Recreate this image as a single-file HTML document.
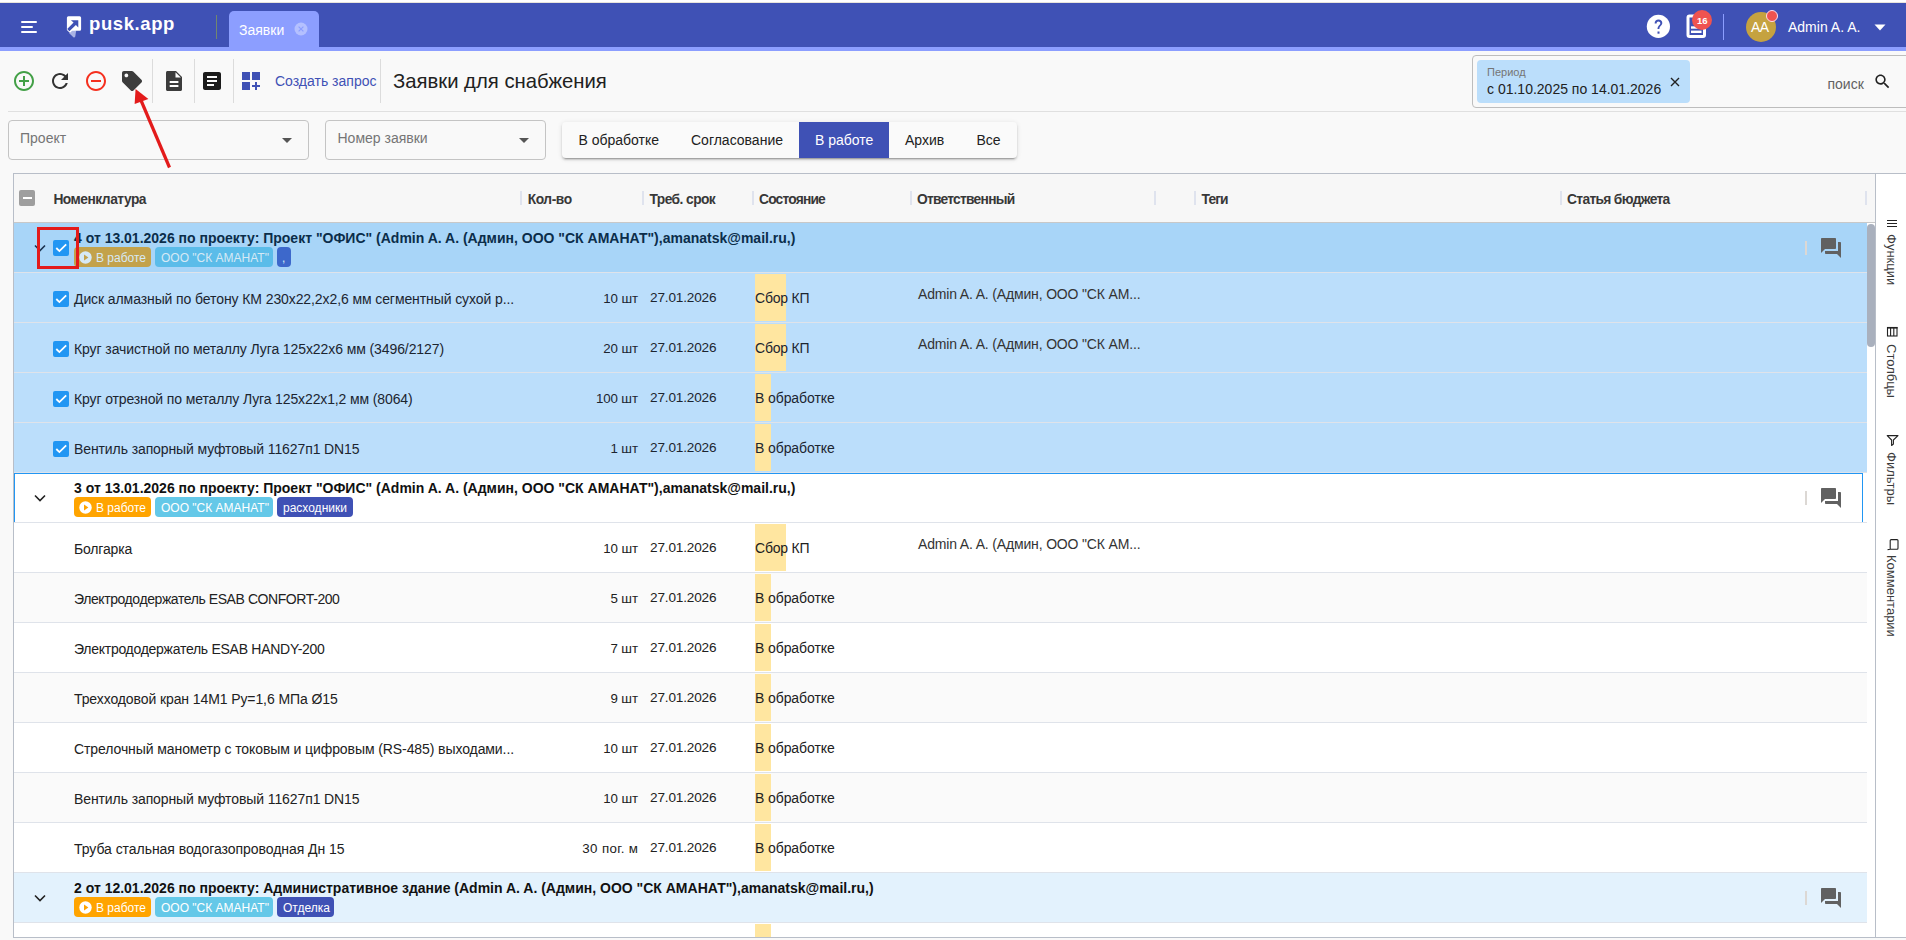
<!DOCTYPE html><html><head><meta charset="utf-8"><style>
*{box-sizing:border-box;margin:0;padding:0}
html,body{width:1906px;height:940px;overflow:hidden;background:#fff}
body{font-family:"Liberation Sans",sans-serif;color:#212121;position:relative}
.a{position:absolute}
.t{position:absolute;white-space:nowrap;line-height:1}
svg{display:block}
</style></head><body>
<div class="a" style="left:0px;top:51px;width:1906px;height:889px;background:#f9f9f9"></div>
<div class="a" style="left:0px;top:2px;width:1906px;height:1px;background:#e8e4dc"></div>
<div class="a" style="left:0px;top:3px;width:1906px;height:44px;background:#3f51b5"></div>
<div class="a" style="left:0px;top:47px;width:1906px;height:4px;background:#8c9eff"></div>
<div class="a" style="left:21px;top:21px;width:16px;height:2px;background:#fff;border-radius:1px"></div>
<div class="a" style="left:21px;top:26px;width:12px;height:2px;background:#fff;border-radius:1px"></div>
<div class="a" style="left:21px;top:31px;width:16px;height:2px;background:#fff;border-radius:1px"></div>
<svg class="a" style="left:60px;top:10px" width="30" height="32" viewBox="60 10 30 32">
<path d="M69.2 33.2 L72.6 29.6 L76.2 30.6 L75.2 36.8 Q74.4 38 73.4 37.2 Z" fill="#a9b3e4"/>
<path d="M68.4 16.2 H79.6 Q81.1 16.2 81.1 17.7 V29.2 Q81.1 30.7 79.6 30.7 H72.2 L70.3 32.6 Q69.6 33.1 69.2 32.3 L66.9 30 V17.7 Q66.9 16.2 68.4 16.2 Z" fill="#fff"/>
<path d="M70.9 20.2 H78.3 V27.4 L75.9 25 L69.4 31.2 L67.2 29 L73.6 22.6 Z" fill="#3f51b5"/>
</svg>
<div class="t" style="left:89px;top:14.74px;font-size:18.5px;color:#fff;font-weight:bold;letter-spacing:0.6px">pusk.app</div>
<div class="a" style="left:216px;top:15px;width:1px;height:24px;background:#71876f"></div>
<div class="a" style="left:229px;top:11px;width:90px;height:36px;background:#8c9eff;border-radius:5px 5px 0 0"></div>
<div class="t" style="left:239px;top:22.65px;font-size:14px;color:#fff;font-weight:normal;">Заявки</div>
<svg class="a" style="left:294px;top:22px" width="14" height="14" viewBox="0 0 14 14">
<circle cx="7" cy="7" r="6.5" fill="#b4c0ff"/>
<path d="M4.6 4.6 L9.4 9.4 M9.4 4.6 L4.6 9.4" stroke="#8c9eff" stroke-width="1.2"/>
</svg>
<svg class="a" style="left:1646px;top:14px" width="25" height="25" viewBox="0 0 25 25">
<circle cx="12.4" cy="12.4" r="11.6" fill="#fff"/>
<path d="M8.6 9.6 C8.6 7.2 10.3 5.6 12.5 5.6 C14.7 5.6 16.3 7.1 16.3 9.1 C16.3 11.6 13.4 12 13.4 15 L11.5 15 C11.5 11.5 14.3 11.2 14.3 9.2 C14.3 8.1 13.5 7.4 12.4 7.4 C11.3 7.4 10.6 8.3 10.6 9.6 Z" fill="#3f51b5"/>
<rect x="11.5" y="17.5" width="2" height="2.2" fill="#3f51b5"/>
</svg>
<svg class="a" style="left:1686px;top:14px" width="21" height="25" viewBox="0 0 21 25">
<rect x="2" y="2" width="16.5" height="20.5" rx="1.5" fill="none" stroke="#fff" stroke-width="3"/>
<rect x="5" y="12.3" width="10.5" height="2.4" fill="#fff"/>
<rect x="5" y="16.6" width="10.5" height="2.4" fill="#fff"/>
</svg>
<div class="a" style="left:1692px;top:10px;width:20px;height:20px;border-radius:50%;background:#ef5350"></div>
<div class="t" style="left:1702.2px;top:15.96px;font-size:9.5px;color:#fff;font-weight:bold;transform:translateX(-50%)">16</div>
<div class="a" style="left:1723px;top:14px;width:1px;height:26px;background:#8c9eff"></div>
<div class="a" style="left:1746px;top:12px;width:30px;height:30px;border-radius:50%;background:#c5a240"></div>
<div class="t" style="left:1751px;top:19.75px;font-size:14px;color:#fff;font-weight:normal;letter-spacing:-0.5px">AA</div>
<div class="a" style="left:1766px;top:10px;width:12px;height:12px;border-radius:50%;background:#ef5350;border:1px solid #fde"></div>
<div class="t" style="left:1788px;top:19.75px;font-size:14px;color:#fff;font-weight:normal;">Admin A. A.</div>
<svg class="a" style="left:1874px;top:24px" width="12" height="7" viewBox="0 0 12 7"><path d="M0.5 0.5 H11.5 L6 6.5 Z" fill="#fff"/></svg>
<svg class="a" style="left:12px;top:69px" width="24" height="24" viewBox="0 0 24 24"><path d="M13 7h-2v4H7v2h4v4h2v-4h4v-2h-4V7zm-1-5C6.48 2 2 6.48 2 12s4.48 10 10 10 10-4.48 10-10S17.52 2 12 2zm0 18c-4.41 0-8-3.59-8-8s3.59-8 8-8 8 3.59 8 8-3.59 8-8 8z" fill="#43a047"/></svg>
<svg class="a" style="left:48px;top:69px" width="24" height="24" viewBox="0 0 24 24"><path d="M17.65 6.35C16.2 4.9 14.21 4 12 4c-4.42 0-7.99 3.58-7.99 8s3.57 8 7.99 8c3.73 0 6.84-2.55 7.73-6h-2.08c-.82 2.33-3.04 4-5.65 4-3.31 0-6-2.69-6-6s2.69-6 6-6c1.66 0 3.14.69 4.22 1.78L13 11h7V4l-2.35 2.35z" fill="#333"/></svg>
<svg class="a" style="left:84px;top:69px" width="24" height="24" viewBox="0 0 24 24"><path d="M7 11v2h10v-2H7zm5-9C6.48 2 2 6.48 2 12s4.48 10 10 10 10-4.48 10-10S17.52 2 12 2zm0 18c-4.41 0-8-3.59-8-8s3.59-8 8-8 8 3.59 8 8-3.59 8-8 8z" fill="#f5301f"/></svg>
<svg class="a" style="left:122px;top:71px" width="20" height="20" viewBox="0 0 512 512"><path fill="#3c3c3c" d="M0 252.118V48C0 21.49 21.49 0 48 0h204.118a48 48 0 0 1 33.941 14.059l211.882 211.882c18.745 18.745 18.745 49.137 0 67.882L293.823 497.941c-18.745 18.745-49.137 18.745-67.882 0L14.059 286.059A48 48 0 0 1 0 252.118zM112 64c-26.51 0-48 21.49-48 48s21.49 48 48 48 48-21.49 48-48-21.49-48-48-48z"/></svg>
<div class="a" style="left:152px;top:59px;width:1px;height:44px;background:#dcdcdc"></div>
<svg class="a" style="left:166px;top:71px" width="16" height="20" viewBox="0 0 16 20">
<path d="M1.5 0 H10 L16 6 V18.5 C16 19.3 15.3 20 14.5 20 H1.5 C0.7 20 0 19.3 0 18.5 V1.5 C0 0.7 0.7 0 1.5 0 Z" fill="#3c3c3c"/>
<path d="M9.5 1.2 V6.5 H14.8 Z" fill="#fff"/>
<rect x="3.7" y="10" width="8.7" height="2" fill="#fff"/>
<rect x="3.7" y="14" width="8.7" height="2" fill="#fff"/>
</svg>
<div class="a" style="left:194px;top:59px;width:1px;height:44px;background:#dcdcdc"></div>
<svg class="a" style="left:200px;top:69px" width="24" height="24" viewBox="0 0 24 24"><path d="M19 3H5c-1.1 0-2 .9-2 2v14c0 1.1.9 2 2 2h14c1.1 0 2-.9 2-2V5c0-1.1-.9-2-2-2zm-5 14H7v-2h7v2zm3-4H7v-2h10v2zm0-4H7V7h10v2z" fill="#1b1b1b"/></svg>
<div class="a" style="left:233px;top:59px;width:1px;height:44px;background:#dcdcdc"></div>
<svg class="a" style="left:239px;top:69px" width="24" height="24" viewBox="0 0 24 24"><path d="M3 3h8v8H3zm10 0h8v8h-8zM3 13h8v8H3zm15 0h-2v3h-3v2h3v3h2v-3h3v-2h-3z" fill="#3f51b5"/></svg>
<div class="t" style="left:275px;top:73.95px;font-size:14px;color:#3f51b5;font-weight:normal;">Создать запрос</div>
<div class="a" style="left:380px;top:59px;width:1px;height:44px;background:#dcdcdc"></div>
<div class="t" style="left:393px;top:71.02px;font-size:20.3px;color:#212121;font-weight:normal;">Заявки для снабжения</div>
<div class="a" style="left:8px;top:111px;width:1898px;height:1px;background:#e0e0e0"></div>
<div class="a" style="left:1472px;top:55px;width:440px;height:53px;border:1px solid #bdbdbd;border-radius:4px"></div>
<div class="a" style="left:1477px;top:60px;width:213px;height:43px;background:#bbdefb;border-radius:4px"></div>
<div class="t" style="left:1487px;top:67.09px;font-size:11px;color:#757575;font-weight:normal;">Период</div>
<div class="t" style="left:1487px;top:82.15px;font-size:14px;color:#212121;font-weight:normal;">с 01.10.2025 по 14.01.2026</div>
<svg class="a" style="left:1669px;top:76px" width="12" height="12" viewBox="0 0 12 12"><path d="M2 2 L10 10 M10 2 L2 10" stroke="#222" stroke-width="1.4"/></svg>
<div class="t" style="left:1827.5px;top:77.15px;font-size:14px;color:#616161;font-weight:normal;">поиск</div>
<svg class="a" style="left:1873px;top:72px" width="19" height="19" viewBox="0 0 24 24"><path fill="#222" d="M15.5 14h-.79l-.28-.27C15.41 12.59 16 11.11 16 9.5 16 5.91 13.09 3 9.5 3S3 5.91 3 9.5 5.91 16 9.5 16c1.61 0 3.09-.59 4.23-1.57l.27.28v.79l5 4.99L20.49 19l-4.99-5zm-6 0C7.01 14 5 11.99 5 9.5S7.01 5 9.5 5 14 7.01 14 9.5 11.99 14 9.5 14z"/></svg>
<div class="a" style="left:8px;top:120px;width:301px;height:40px;border:1px solid #c4c4c4;border-radius:4px"></div>
<div class="t" style="left:20px;top:130.95px;font-size:14px;color:#757575;font-weight:normal;">Проект</div>
<svg class="a" style="left:282px;top:138px" width="10" height="5" viewBox="0 0 10 5"><path d="M0 0H10L5 5Z" fill="#555"/></svg>
<div class="a" style="left:325px;top:120px;width:221px;height:40px;border:1px solid #c4c4c4;border-radius:4px"></div>
<div class="t" style="left:337.5px;top:130.95px;font-size:14px;color:#757575;font-weight:normal;">Номер заявки</div>
<svg class="a" style="left:519px;top:138px" width="10" height="5" viewBox="0 0 10 5"><path d="M0 0H10L5 5Z" fill="#555"/></svg>
<div class="a" style="left:562px;top:122px;width:455px;height:36px;background:#fafafa;border-radius:4px;box-shadow:0 3px 1px -2px rgba(0,0,0,.2),0 2px 2px 0 rgba(0,0,0,.14),0 1px 5px 0 rgba(0,0,0,.12)"></div>
<div class="a" style="left:799px;top:122px;width:90px;height:36px;background:#3f51b5"></div>
<div class="t" style="left:578.5px;top:133.15px;font-size:14px;color:#212121;font-weight:normal;">В обработке</div>
<div class="t" style="left:691px;top:133.15px;font-size:14px;color:#212121;font-weight:normal;">Согласование</div>
<div class="t" style="left:815px;top:133.15px;font-size:14px;color:#fff;font-weight:normal;">В работе</div>
<div class="t" style="left:905px;top:133.15px;font-size:14px;color:#212121;font-weight:normal;">Архив</div>
<div class="t" style="left:976.5px;top:133.15px;font-size:14px;color:#212121;font-weight:normal;">Все</div>
<div class="a" style="left:13px;top:173px;width:1893px;height:765px;background:#fff"></div>
<div class="a" style="left:13px;top:173px;width:1893px;height:1px;background:#b8bec8"></div>
<div class="a" style="left:13px;top:173px;width:1px;height:765px;background:#b8bec8"></div>
<div class="a" style="left:1875px;top:173px;width:1px;height:765px;background:#b8bec8"></div>
<div class="a" style="left:13px;top:937px;width:1893px;height:1px;background:#b8bec8"></div>
<div class="a" style="left:14px;top:174px;width:1861px;height:48px;background:#f7f7f7"></div>
<div class="a" style="left:14px;top:222px;width:1861px;height:1px;background:#c8c8c8"></div>
<div class="a" style="left:19px;top:190px;width:16px;height:16px;background:#9e9e9e;border-radius:2px"></div>
<div class="a" style="left:22.5px;top:197px;width:9px;height:2px;background:#fff"></div>
<div class="t" style="left:53.4px;top:192.92px;font-size:13.8px;color:#383838;font-weight:bold;letter-spacing:-0.503px;">Номенклатура</div>
<div class="t" style="left:527.7px;top:192.92px;font-size:13.8px;color:#383838;font-weight:bold;letter-spacing:-0.432px;">Кол-во</div>
<div class="t" style="left:649.5px;top:192.92px;font-size:13.8px;color:#383838;font-weight:bold;letter-spacing:-0.575px;">Треб. срок</div>
<div class="t" style="left:759px;top:192.92px;font-size:13.8px;color:#383838;font-weight:bold;letter-spacing:-0.806px;">Состояние</div>
<div class="t" style="left:917px;top:192.92px;font-size:13.8px;color:#383838;font-weight:bold;letter-spacing:-0.746px;">Ответственный</div>
<div class="t" style="left:1201.5px;top:192.92px;font-size:13.8px;color:#383838;font-weight:bold;letter-spacing:-0.864px;">Теги</div>
<div class="t" style="left:1567px;top:192.92px;font-size:13.8px;color:#383838;font-weight:bold;letter-spacing:-0.666px;">Статья бюджета</div>
<div class="a" style="left:520px;top:191px;width:2px;height:14px;background:#dfe3ee"></div>
<div class="a" style="left:642px;top:191px;width:2px;height:14px;background:#dfe3ee"></div>
<div class="a" style="left:752px;top:191px;width:2px;height:14px;background:#dfe3ee"></div>
<div class="a" style="left:910px;top:191px;width:2px;height:14px;background:#dfe3ee"></div>
<div class="a" style="left:1154px;top:191px;width:2px;height:14px;background:#dfe3ee"></div>
<div class="a" style="left:1194px;top:191px;width:2px;height:14px;background:#dfe3ee"></div>
<div class="a" style="left:1560px;top:191px;width:2px;height:14px;background:#dfe3ee"></div>
<div class="a" style="left:1865px;top:191px;width:2px;height:14px;background:#dfe3ee"></div>
<div class="a" style="left:14px;top:223px;width:1853px;height:49px;background:#a8d5f8"></div>
<div class="a" style="left:14px;top:272px;width:1853px;height:1px;background:#dfe3ea"></div>
<svg class="a" style="left:34px;top:244px" width="12" height="8" viewBox="0 0 12 8"><path d="M1 1.5 L6 6.5 L11 1.5" fill="none" stroke="#1b3350" stroke-width="1.6"/></svg>
<svg class="a" style="left:53px;top:240px" width="16" height="16" viewBox="0 0 16 16"><rect width="16" height="16" rx="2" fill="#2196f3"/><path d="M3.3 8.0 L6.4 11.1 L13.2 4.3" fill="none" stroke="#fff" stroke-width="1.8"/></svg>
<div class="t" style="left:74px;top:231.15px;font-size:14px;color:#0b2d4a;font-weight:bold;">4 от 13.01.2026 по проекту: Проект "ОФИС" (Admin A. A. (Админ, ООО "СК АМАНАТ"),amanatsk@mail.ru,)</div>
<div class="a" style="left:74px;top:247px;width:77px;height:20px;background:#c3a24b;border-radius:4px"></div>
<svg class="a" style="left:79px;top:251px" width="13" height="13" viewBox="0 0 13 13"><circle cx="6.5" cy="6.5" r="6.2" fill="#d6e9f5"/><path d="M5 3.6 L9.4 6.5 L5 9.4 Z" fill="#c3a24b"/></svg>
<div class="t" style="left:96px;top:251.84px;font-size:12px;color:#d6e9f5;font-weight:normal;">В работе</div>
<div class="a" style="left:155px;top:247px;width:118px;height:20px;background:#5bbce9;border-radius:4px"></div>
<div class="t" style="left:161px;top:251.84px;font-size:12px;color:#d6e9f5;font-weight:normal;">ООО "СК АМАНАТ"</div>
<div class="a" style="left:277px;top:247px;width:14px;height:20px;background:#3d68cb;border-radius:4px"></div>
<div class="t" style="left:282px;top:251.84px;font-size:12px;color:#d6e9f5;font-weight:normal;">,</div>
<div class="a" style="left:1805px;top:241px;width:1.5px;height:14px;background:#dcd8d4"></div>
<svg class="a" style="left:1819px;top:236px" width="24" height="24" viewBox="0 0 24 24"><path fill="#616161" d="M21 6h-2v9H6v2c0 .55.45 1 1 1h11l4 4V7c0-.55-.45-1-1-1zm-4 6V3c0-.55-.45-1-1-1H3c-.55 0-1 .45-1 1v14l4-4h10c.55 0 1-.45 1-1z"/></svg>
<div class="a" style="left:14px;top:273px;width:1853px;height:49px;background:#bbdefb"></div>
<div class="a" style="left:14px;top:322px;width:1853px;height:1px;background:#dfe3ea"></div>
<svg class="a" style="left:53px;top:291px" width="16" height="16" viewBox="0 0 16 16"><rect width="16" height="16" rx="2" fill="#2196f3"/><path d="M3.3 8.0 L6.4 11.1 L13.2 4.3" fill="none" stroke="#fff" stroke-width="1.8"/></svg>
<div class="t" style="left:74px;top:292.15px;font-size:14px;color:#1c2530;font-weight:normal;letter-spacing:-0.095px;">Диск алмазный по бетону КМ 230x22,2x2,6 мм сегментный сухой р...</div>
<div class="t" style="right:1268.13px;top:291.54px;font-size:13.3px;color:#1c2530;font-weight:normal;letter-spacing:-0.130px;">10 шт</div>
<div class="t" style="left:650px;top:291.29px;font-size:13.6px;color:#1c2530;font-weight:normal;letter-spacing:-0.165px;">27.01.2026</div>
<div class="a" style="left:755px;top:274px;width:31px;height:47px;background:#ffe6a0"></div>
<div class="t" style="left:755px;top:290.95px;font-size:14px;color:#1c2530;font-weight:normal;letter-spacing:-0.202px;">Сбор КП</div>
<div class="t" style="left:918px;top:286.95px;font-size:14px;color:#333;font-weight:normal;letter-spacing:-0.162px;">Admin A. A. (Админ, ООО "СК АМ...</div>
<div class="a" style="left:14px;top:323px;width:1853px;height:49px;background:#bbdefb"></div>
<div class="a" style="left:14px;top:372px;width:1853px;height:1px;background:#dfe3ea"></div>
<svg class="a" style="left:53px;top:341px" width="16" height="16" viewBox="0 0 16 16"><rect width="16" height="16" rx="2" fill="#2196f3"/><path d="M3.3 8.0 L6.4 11.1 L13.2 4.3" fill="none" stroke="#fff" stroke-width="1.8"/></svg>
<div class="t" style="left:74px;top:342.15px;font-size:14px;color:#1c2530;font-weight:normal;letter-spacing:-0.092px;">Круг зачистной по металлу Луга 125x22x6 мм (3496/2127)</div>
<div class="t" style="right:1268.13px;top:341.54px;font-size:13.3px;color:#1c2530;font-weight:normal;letter-spacing:-0.130px;">20 шт</div>
<div class="t" style="left:650px;top:341.29px;font-size:13.6px;color:#1c2530;font-weight:normal;letter-spacing:-0.165px;">27.01.2026</div>
<div class="a" style="left:755px;top:324px;width:31px;height:47px;background:#ffe6a0"></div>
<div class="t" style="left:755px;top:340.95px;font-size:14px;color:#1c2530;font-weight:normal;letter-spacing:-0.202px;">Сбор КП</div>
<div class="t" style="left:918px;top:336.95px;font-size:14px;color:#333;font-weight:normal;letter-spacing:-0.162px;">Admin A. A. (Админ, ООО "СК АМ...</div>
<div class="a" style="left:14px;top:373px;width:1853px;height:49px;background:#bbdefb"></div>
<div class="a" style="left:14px;top:422px;width:1853px;height:1px;background:#dfe3ea"></div>
<svg class="a" style="left:53px;top:391px" width="16" height="16" viewBox="0 0 16 16"><rect width="16" height="16" rx="2" fill="#2196f3"/><path d="M3.3 8.0 L6.4 11.1 L13.2 4.3" fill="none" stroke="#fff" stroke-width="1.8"/></svg>
<div class="t" style="left:74px;top:392.15px;font-size:14px;color:#1c2530;font-weight:normal;letter-spacing:-0.125px;">Круг отрезной по металлу Луга 125x22x1,2 мм (8064)</div>
<div class="t" style="right:1268.11px;top:391.54px;font-size:13.3px;color:#1c2530;font-weight:normal;letter-spacing:-0.107px;">100 шт</div>
<div class="t" style="left:650px;top:391.29px;font-size:13.6px;color:#1c2530;font-weight:normal;letter-spacing:-0.165px;">27.01.2026</div>
<div class="a" style="left:755px;top:374px;width:16px;height:47px;background:#ffe6a0"></div>
<div class="t" style="left:755px;top:390.95px;font-size:14px;color:#1c2530;font-weight:normal;letter-spacing:-0.090px;">В обработке</div>
<div class="a" style="left:14px;top:423px;width:1853px;height:49px;background:#bbdefb"></div>
<div class="a" style="left:14px;top:472px;width:1853px;height:1px;background:#dfe3ea"></div>
<svg class="a" style="left:53px;top:441px" width="16" height="16" viewBox="0 0 16 16"><rect width="16" height="16" rx="2" fill="#2196f3"/><path d="M3.3 8.0 L6.4 11.1 L13.2 4.3" fill="none" stroke="#fff" stroke-width="1.8"/></svg>
<div class="t" style="left:74px;top:442.15px;font-size:14px;color:#1c2530;font-weight:normal;letter-spacing:-0.101px;">Вентиль запорный муфтовый 11627п1 DN15</div>
<div class="t" style="right:1268.09px;top:441.54px;font-size:13.3px;color:#1c2530;font-weight:normal;letter-spacing:-0.090px;">1 шт</div>
<div class="t" style="left:650px;top:441.29px;font-size:13.6px;color:#1c2530;font-weight:normal;letter-spacing:-0.165px;">27.01.2026</div>
<div class="a" style="left:755px;top:424px;width:16px;height:47px;background:#ffe6a0"></div>
<div class="t" style="left:755px;top:440.95px;font-size:14px;color:#1c2530;font-weight:normal;letter-spacing:-0.090px;">В обработке</div>
<div class="a" style="left:14px;top:473px;width:1853px;height:49px;background:#fff"></div>
<div class="a" style="left:14px;top:522px;width:1853px;height:1px;background:#dfe3ea"></div>
<div class="a" style="left:14px;top:473px;width:1849px;height:1px;background:#2196f3"></div>
<div class="a" style="left:14px;top:473px;width:1px;height:49px;background:#2196f3"></div>
<div class="a" style="left:1862px;top:473px;width:1px;height:49px;background:#2196f3"></div>
<svg class="a" style="left:34px;top:494px" width="12" height="8" viewBox="0 0 12 8"><path d="M1 1.5 L6 6.5 L11 1.5" fill="none" stroke="#222" stroke-width="1.6"/></svg>
<div class="t" style="left:74px;top:481.15px;font-size:14px;color:#111;font-weight:bold;">3 от 13.01.2026 по проекту: Проект "ОФИС" (Admin A. A. (Админ, ООО "СК АМАНАТ"),amanatsk@mail.ru,)</div>
<div class="a" style="left:74px;top:497px;width:77px;height:20px;background:#ffa400;border-radius:4px"></div>
<svg class="a" style="left:79px;top:501px" width="13" height="13" viewBox="0 0 13 13"><circle cx="6.5" cy="6.5" r="6.2" fill="#fff"/><path d="M5 3.6 L9.4 6.5 L5 9.4 Z" fill="#ffa400"/></svg>
<div class="t" style="left:96px;top:501.84px;font-size:12px;color:#fff;font-weight:normal;">В работе</div>
<div class="a" style="left:155px;top:497px;width:118px;height:20px;background:#64c8e8;border-radius:4px"></div>
<div class="t" style="left:161px;top:501.84px;font-size:12px;color:#fff;font-weight:normal;">ООО "СК АМАНАТ"</div>
<div class="a" style="left:277px;top:497px;width:76px;height:20px;background:#3f51b5;border-radius:4px"></div>
<div class="t" style="left:283px;top:501.84px;font-size:12px;color:#fff;font-weight:normal;">расходники</div>
<div class="a" style="left:1805px;top:491px;width:1.5px;height:14px;background:#dcd8d4"></div>
<svg class="a" style="left:1819px;top:486px" width="24" height="24" viewBox="0 0 24 24"><path fill="#616161" d="M21 6h-2v9H6v2c0 .55.45 1 1 1h11l4 4V7c0-.55-.45-1-1-1zm-4 6V3c0-.55-.45-1-1-1H3c-.55 0-1 .45-1 1v14l4-4h10c.55 0 1-.45 1-1z"/></svg>
<div class="a" style="left:14px;top:523px;width:1853px;height:49px;background:#fff"></div>
<div class="a" style="left:14px;top:572px;width:1853px;height:1px;background:#dfe3ea"></div>
<div class="t" style="left:74px;top:542.15px;font-size:14px;color:#212121;font-weight:normal;letter-spacing:-0.180px;">Болгарка</div>
<div class="t" style="right:1268.13px;top:541.54px;font-size:13.3px;color:#212121;font-weight:normal;letter-spacing:-0.130px;">10 шт</div>
<div class="t" style="left:650px;top:541.29px;font-size:13.6px;color:#212121;font-weight:normal;letter-spacing:-0.165px;">27.01.2026</div>
<div class="a" style="left:755px;top:524px;width:31px;height:47px;background:#ffe6a0"></div>
<div class="t" style="left:755px;top:540.95px;font-size:14px;color:#212121;font-weight:normal;letter-spacing:-0.202px;">Сбор КП</div>
<div class="t" style="left:918px;top:536.95px;font-size:14px;color:#333;font-weight:normal;letter-spacing:-0.162px;">Admin A. A. (Админ, ООО "СК АМ...</div>
<div class="a" style="left:14px;top:573px;width:1853px;height:49px;background:#fafafa"></div>
<div class="a" style="left:14px;top:622px;width:1853px;height:1px;background:#dfe3ea"></div>
<div class="t" style="left:74px;top:592.15px;font-size:14px;color:#212121;font-weight:normal;letter-spacing:-0.418px;">Электрододержатель ESAB CONFORT-200</div>
<div class="t" style="right:1268.09px;top:591.54px;font-size:13.3px;color:#212121;font-weight:normal;letter-spacing:-0.090px;">5 шт</div>
<div class="t" style="left:650px;top:591.29px;font-size:13.6px;color:#212121;font-weight:normal;letter-spacing:-0.165px;">27.01.2026</div>
<div class="a" style="left:755px;top:574px;width:16px;height:47px;background:#ffe6a0"></div>
<div class="t" style="left:755px;top:590.95px;font-size:14px;color:#212121;font-weight:normal;letter-spacing:-0.090px;">В обработке</div>
<div class="a" style="left:14px;top:623px;width:1853px;height:49px;background:#fff"></div>
<div class="a" style="left:14px;top:672px;width:1853px;height:1px;background:#dfe3ea"></div>
<div class="t" style="left:74px;top:642.15px;font-size:14px;color:#212121;font-weight:normal;letter-spacing:-0.274px;">Электрододержатель ESAB HANDY-200</div>
<div class="t" style="right:1268.09px;top:641.54px;font-size:13.3px;color:#212121;font-weight:normal;letter-spacing:-0.090px;">7 шт</div>
<div class="t" style="left:650px;top:641.29px;font-size:13.6px;color:#212121;font-weight:normal;letter-spacing:-0.165px;">27.01.2026</div>
<div class="a" style="left:755px;top:624px;width:16px;height:47px;background:#ffe6a0"></div>
<div class="t" style="left:755px;top:640.95px;font-size:14px;color:#212121;font-weight:normal;letter-spacing:-0.090px;">В обработке</div>
<div class="a" style="left:14px;top:673px;width:1853px;height:49px;background:#fafafa"></div>
<div class="a" style="left:14px;top:722px;width:1853px;height:1px;background:#dfe3ea"></div>
<div class="t" style="left:74px;top:692.15px;font-size:14px;color:#212121;font-weight:normal;letter-spacing:-0.096px;">Трехходовой кран 14M1 Py=1,6 МПа Ø15</div>
<div class="t" style="right:1268.09px;top:691.54px;font-size:13.3px;color:#212121;font-weight:normal;letter-spacing:-0.090px;">9 шт</div>
<div class="t" style="left:650px;top:691.29px;font-size:13.6px;color:#212121;font-weight:normal;letter-spacing:-0.165px;">27.01.2026</div>
<div class="a" style="left:755px;top:674px;width:16px;height:47px;background:#ffe6a0"></div>
<div class="t" style="left:755px;top:690.95px;font-size:14px;color:#212121;font-weight:normal;letter-spacing:-0.090px;">В обработке</div>
<div class="a" style="left:14px;top:723px;width:1853px;height:49px;background:#fff"></div>
<div class="a" style="left:14px;top:772px;width:1853px;height:1px;background:#dfe3ea"></div>
<div class="t" style="left:74px;top:742.15px;font-size:14px;color:#212121;font-weight:normal;letter-spacing:-0.089px;">Стрелочный манометр с токовым и цифровым (RS-485) выходами...</div>
<div class="t" style="right:1268.13px;top:741.54px;font-size:13.3px;color:#212121;font-weight:normal;letter-spacing:-0.130px;">10 шт</div>
<div class="t" style="left:650px;top:741.29px;font-size:13.6px;color:#212121;font-weight:normal;letter-spacing:-0.165px;">27.01.2026</div>
<div class="a" style="left:755px;top:724px;width:16px;height:47px;background:#ffe6a0"></div>
<div class="t" style="left:755px;top:740.95px;font-size:14px;color:#212121;font-weight:normal;letter-spacing:-0.090px;">В обработке</div>
<div class="a" style="left:14px;top:773px;width:1853px;height:49px;background:#fafafa"></div>
<div class="a" style="left:14px;top:822px;width:1853px;height:1px;background:#dfe3ea"></div>
<div class="t" style="left:74px;top:792.15px;font-size:14px;color:#212121;font-weight:normal;letter-spacing:-0.101px;">Вентиль запорный муфтовый 11627п1 DN15</div>
<div class="t" style="right:1268.13px;top:791.54px;font-size:13.3px;color:#212121;font-weight:normal;letter-spacing:-0.130px;">10 шт</div>
<div class="t" style="left:650px;top:791.29px;font-size:13.6px;color:#212121;font-weight:normal;letter-spacing:-0.165px;">27.01.2026</div>
<div class="a" style="left:755px;top:774px;width:16px;height:47px;background:#ffe6a0"></div>
<div class="t" style="left:755px;top:790.95px;font-size:14px;color:#212121;font-weight:normal;letter-spacing:-0.090px;">В обработке</div>
<div class="a" style="left:14px;top:823px;width:1853px;height:49px;background:#fff"></div>
<div class="a" style="left:14px;top:872px;width:1853px;height:1px;background:#dfe3ea"></div>
<div class="t" style="left:74px;top:842.15px;font-size:14px;color:#212121;font-weight:normal;letter-spacing:-0.049px;">Труба стальная водогазопроводная Дн 15</div>
<div class="t" style="right:1267.65px;top:841.54px;font-size:13.3px;color:#212121;font-weight:normal;letter-spacing:0.351px;">30 пог. м</div>
<div class="t" style="left:650px;top:841.29px;font-size:13.6px;color:#212121;font-weight:normal;letter-spacing:-0.165px;">27.01.2026</div>
<div class="a" style="left:755px;top:824px;width:16px;height:47px;background:#ffe6a0"></div>
<div class="t" style="left:755px;top:840.95px;font-size:14px;color:#212121;font-weight:normal;letter-spacing:-0.090px;">В обработке</div>
<div class="a" style="left:14px;top:873px;width:1853px;height:49px;background:#e3f2fd"></div>
<div class="a" style="left:14px;top:922px;width:1853px;height:1px;background:#dfe3ea"></div>
<svg class="a" style="left:34px;top:894px" width="12" height="8" viewBox="0 0 12 8"><path d="M1 1.5 L6 6.5 L11 1.5" fill="none" stroke="#222" stroke-width="1.6"/></svg>
<div class="t" style="left:74px;top:881.15px;font-size:14px;color:#111;font-weight:bold;">2 от 12.01.2026 по проекту: Административное здание (Admin A. A. (Админ, ООО "СК АМАНАТ"),amanatsk@mail.ru,)</div>
<div class="a" style="left:74px;top:897px;width:77px;height:20px;background:#ffa400;border-radius:4px"></div>
<svg class="a" style="left:79px;top:901px" width="13" height="13" viewBox="0 0 13 13"><circle cx="6.5" cy="6.5" r="6.2" fill="#fff"/><path d="M5 3.6 L9.4 6.5 L5 9.4 Z" fill="#ffa400"/></svg>
<div class="t" style="left:96px;top:901.84px;font-size:12px;color:#fff;font-weight:normal;">В работе</div>
<div class="a" style="left:155px;top:897px;width:118px;height:20px;background:#64c8e8;border-radius:4px"></div>
<div class="t" style="left:161px;top:901.84px;font-size:12px;color:#fff;font-weight:normal;">ООО "СК АМАНАТ"</div>
<div class="a" style="left:277px;top:897px;width:57px;height:20px;background:#3f51b5;border-radius:4px"></div>
<div class="t" style="left:283px;top:901.84px;font-size:12px;color:#fff;font-weight:normal;">Отделка</div>
<div class="a" style="left:1805px;top:891px;width:1.5px;height:14px;background:#dcd8d4"></div>
<svg class="a" style="left:1819px;top:886px" width="24" height="24" viewBox="0 0 24 24"><path fill="#616161" d="M21 6h-2v9H6v2c0 .55.45 1 1 1h11l4 4V7c0-.55-.45-1-1-1zm-4 6V3c0-.55-.45-1-1-1H3c-.55 0-1 .45-1 1v14l4-4h10c.55 0 1-.45 1-1z"/></svg>
<div class="a" style="left:755px;top:924px;width:16px;height:13px;background:#ffe6a0"></div>
<div class="a" style="left:1875px;top:173px;width:1px;height:765px;background:#b8bec8"></div>
<div class="a" style="left:1867px;top:224px;width:8px;height:123px;background:#a9b0bd;border-radius:4px"></div>
<svg class="a" style="left:1880px;top:210px" width="26" height="350" viewBox="1880 210 26 350">
<g stroke="#222" fill="none" stroke-width="1.1">
<path d="M1887 220.5H1897M1887 223.5H1897M1887 226.5H1897"/>
<rect x="1887.5" y="327.5" width="9.5" height="8.5"/>
<path d="M1887 327.8H1897.5" stroke-width="1.6"/>
<path d="M1890.6 328V336M1893.8 328V336"/>
<path d="M1887.2 435.6H1898 L1893.4 440 V444 L1891.6 445.5 V440 Z" stroke-linejoin="round"/>
<path d="M1890.2 549.2V540.6Q1890.2 539.6 1891.2 539.6H1897Q1898 539.6 1898 540.6V548.2Q1898 549.2 1897 549.2H1890.2L1887.6 549.6"/>
</g></svg>
<div class="t" style="left:1898px;top:234px;transform-origin:0 0;transform:rotate(90deg);font-size:13px;color:#3a3a3a">Функции</div>
<div class="t" style="left:1898px;top:344px;transform-origin:0 0;transform:rotate(90deg);font-size:13px;color:#3a3a3a">Столбцы</div>
<div class="t" style="left:1898px;top:452px;transform-origin:0 0;transform:rotate(90deg);font-size:13px;color:#3a3a3a">Фильтры</div>
<div class="t" style="left:1898px;top:555px;transform-origin:0 0;transform:rotate(90deg);font-size:13px;color:#3a3a3a">Комментарии</div>
<div class="a" style="left:37px;top:227px;width:42px;height:42px;border:3px solid #e31b1b"></div>
<svg class="a" style="left:0;top:0" width="1906" height="940" viewBox="0 0 1906 940" style="pointer-events:none">
<line x1="169.5" y1="167.5" x2="140" y2="98" stroke="#e31b1b" stroke-width="3.2"/>
<path d="M135.6 89 L134.6 104 L148.4 99 Z" fill="#e31b1b"/>
</svg>
</body></html>
